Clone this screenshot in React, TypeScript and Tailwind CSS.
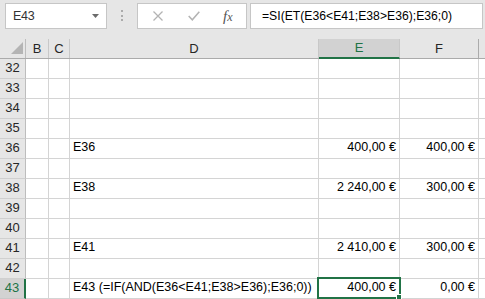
import React from "react";

type RowData = { n: number; d?: string; e?: string; f?: string };

const rows: RowData[] = [
  { n: 32 },
  { n: 33 },
  { n: 34 },
  { n: 35 },
  { n: 36, d: "E36", e: "400,00 €", f: "400,00 €" },
  { n: 37 },
  { n: 38, d: "E38", e: "2 240,00 €", f: "300,00 €" },
  { n: 39 },
  { n: 40 },
  { n: 41, d: "E41", e: "2 410,00 €", f: "300,00 €" },
  { n: 42 },
  { n: 43, d: "E43 (=IF(AND(E36<E41;E38>E36);E36;0))", e: "400,00 €", f: "0,00 €" },
];

function GridRow({ r }: { r: RowData }) {
  const sel = r.n === 43;
  return (
    <div className="flex h-[20px]">
      <div
        className={
          sel
            ? "w-[26px] shrink-0 h-full flex items-end justify-center pb-[1px] bg-[#d2d2d2] border-r-2 border-r-[#217346] border-b border-b-[#c8c8c8] text-[#217346] text-[13px]"
            : "w-[26px] shrink-0 h-full flex items-end justify-center pb-[1px] bg-[#e6e6e6] border-r border-r-[#bdbdbd] border-b border-b-[#d0d0d0] text-[#262626] text-[13px]"
        }
      >
        {r.n}
      </div>
      <div className="w-[23px] shrink-0 h-full bg-white border-r border-b border-[#d4d4d4]" />
      <div className="w-[21px] shrink-0 h-full bg-white border-r border-b border-[#d4d4d4]" />
      <div className="w-[249px] shrink-0 h-full bg-white border-r border-b border-[#d4d4d4] flex items-end pb-[1px] pl-[3px] whitespace-nowrap text-[12.5px] text-black">
        {r.d}
      </div>
      <div className="relative w-[81px] shrink-0 h-full bg-white border-r border-b border-[#d4d4d4] flex items-end justify-end pb-[1px] pr-[3px] whitespace-nowrap text-[12.5px] text-black">
        {r.e}
        {sel && (
          <>
            <div className="absolute left-[-2px] top-[-2px] w-[84px] h-[22px] border-2 border-[#217346]" />
            <div className="absolute left-[77px] top-[15px] w-[6px] h-[6px] bg-[#217346] border border-white" />
          </>
        )}
      </div>
      <div className="w-[79px] shrink-0 h-full bg-white border-r border-b border-[#d4d4d4] flex items-end justify-end pb-[1px] pr-[3px] whitespace-nowrap text-[12.5px] text-black">
        {r.f}
      </div>
      <div className="flex-1 h-full bg-white border-b border-[#d4d4d4]" />
    </div>
  );
}

export default function App() {
  return (
    <div className="w-[485px] h-[299px] overflow-hidden bg-[#e6e6e6] font-['Liberation_Sans',Arial,sans-serif]">
      {/* toolbar */}
      <div className="h-[39px] flex items-start pt-[3px]">
        <div className="ml-[5px] w-[102px] h-[26px] shrink-0 bg-white border border-[#c6c6c6] flex items-center pl-[7px] pr-[7px]">
          <span className="text-[12.5px] text-[#333] tracking-[-0.3px]">E43</span>
          <svg className="ml-auto" width="7" height="4" viewBox="0 0 7 4">
            <polygon points="0,0 7,0 3.5,4" fill="#6b6b6b" />
          </svg>
        </div>
        <div className="ml-[14px] w-[2px] h-[26px] shrink-0 flex flex-col items-center pt-[7px] gap-[2.5px]">
          <div className="w-[2px] h-[2px] bg-[#ababab]" />
          <div className="w-[2px] h-[2px] bg-[#ababab]" />
          <div className="w-[2px] h-[2px] bg-[#ababab]" />
        </div>
        <div className="ml-[14px] w-[110px] h-[26px] shrink-0 bg-white border border-[#c6c6c6] flex items-center">
          <svg className="ml-[15px]" width="10" height="10" viewBox="0 0 10 10">
            <path d="M0.5 0.5 L9.5 9.5 M9.5 0.5 L0.5 9.5" stroke="#b3b3b3" strokeWidth="1.3" fill="none" />
          </svg>
          <svg className="ml-[25px]" width="12" height="10" viewBox="0 0 12 10">
            <path d="M0.7 5 L4.3 8.8 L11.3 0.8" stroke="#b3b3b3" strokeWidth="1.5" fill="none" />
          </svg>
          <span className="ml-[23px] font-['Liberation_Serif',serif] italic text-[15px] text-[#555] leading-none">
            f<span className="text-[12px]">x</span>
          </span>
        </div>
        <div className="ml-[3px] w-[233px] h-[26px] shrink-0 bg-white border border-[#c6c6c6] flex items-center pl-[11px]">
          <span className="text-[12.2px] text-black whitespace-nowrap">=SI(ET(E36&lt;E41;E38&gt;E36);E36;0)</span>
        </div>
      </div>
      {/* column headers */}
      <div className="flex h-[20px] bg-[#e6e6e6] border-b border-b-[#ababab]">
        <div className="relative w-[26px] shrink-0 h-full border-r border-r-[#bdbdbd]">
          <svg className="absolute left-0 top-0" width="26" height="19" viewBox="0 0 26 19">
            <polygon points="23,3 23,15 11,15" fill="#b4b4b4" />
          </svg>
        </div>
        <div className="w-[23px] shrink-0 h-full border-r border-r-[#c8c8c8] flex items-center justify-center text-[13px] text-[#262626]">B</div>
        <div className="w-[21px] shrink-0 h-full border-r border-r-[#c8c8c8] flex items-center justify-center text-[13px] text-[#262626]">C</div>
        <div className="w-[249px] shrink-0 h-full border-r border-r-[#c8c8c8] flex items-center justify-center text-[13px] text-[#262626]">D</div>
        <div className="w-[81px] shrink-0 h-[calc(100%+1px)] bg-[#d2d2d2] border-r border-r-[#c8c8c8] border-b-2 border-b-[#217346] flex items-center justify-center text-[13px] text-[#217346]">E</div>
        <div className="w-[79px] shrink-0 h-full border-r border-r-[#ababab] flex items-center justify-center text-[13px] text-[#262626]">F</div>
        <div className="flex-1 h-full" />
      </div>
      {rows.map((r) => (
        <GridRow key={r.n} r={r} />
      ))}
    </div>
  );
}
